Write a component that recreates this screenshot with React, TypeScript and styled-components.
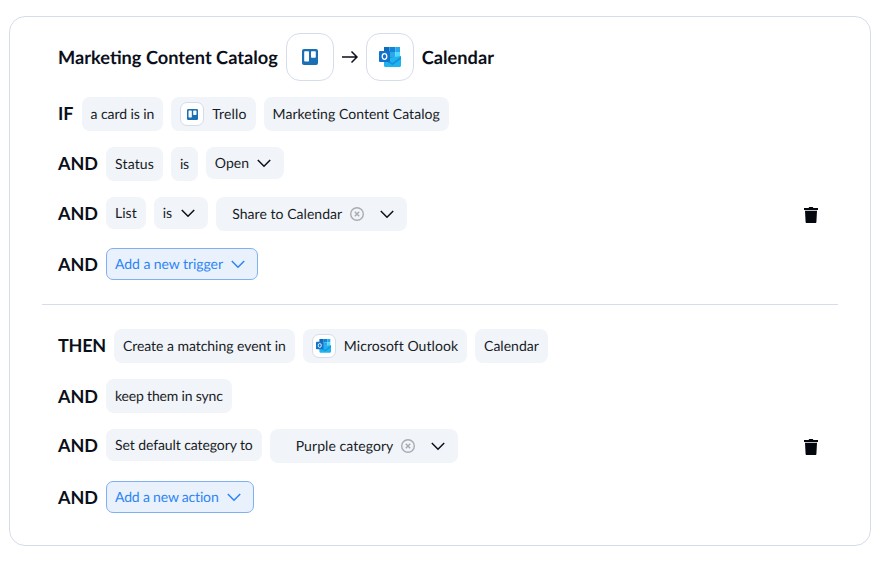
import React from "react";
import styled, { createGlobalStyle } from "styled-components";

const Global = createGlobalStyle`
  html, body { margin: 0; padding: 0; background: #fff; }
  body {
    font-family: Lato, "Liberation Sans", sans-serif;
    color: #0b0f1a;
    text-rendering: geometricPrecision;
  }
`;

const Page = styled.div`
  width: 883px;
  height: 565px;
  padding: 16px 12px 19px 9px;
  box-sizing: border-box;
`;

const Card = styled.div`
  height: 530px;
  box-sizing: border-box;
  border: 1px solid #d5ddea;
  border-radius: 16px;
  padding: 16px 32px;
  display: flex;
  flex-direction: column;
`;

const Section = styled.div`
  display: flex;
  flex-direction: column;
  gap: 16px;
  padding: 0 16px;
`;

const Divider = styled.hr`
  border: 0;
  height: 1px;
  background: #d5ddea;
  margin: 23px 0 24px;
`;

const TitleRow = styled.div`
  display: flex;
  align-items: center;
  height: 48px;
  gap: 8px;
  font-size: 18.22px;
  font-weight: 700;
`;

const LogoBox = styled.div`
  width: 48px;
  height: 48px;
  box-sizing: border-box;
  border: 1px solid #d5ddea;
  border-radius: 14px;
  display: flex;
  align-items: center;
  justify-content: center;
  background: #fff;
`;

const ArrowSlot = styled.div`
  width: 16px;
  display: flex;
  justify-content: center;
`;

const Row = styled.div`
  display: flex;
  align-items: flex-start;
  gap: 8px;
  height: 34px;
`;

const Keyword = styled.div<{ $shift?: number; $ls?: number }>`
  font-size: 18px;
  font-weight: 700;
  line-height: 32px;
  height: 34px;
  box-sizing: border-box;
  padding-top: ${(p) => p.$shift ?? 0}px;
  letter-spacing: ${(p) => p.$ls ?? 0}px;
`;

const Pill = styled.div<{ $h?: number; $pl?: number; $pr?: number; $ls?: number }>`
  height: ${(p) => p.$h ?? 34}px;
  box-sizing: border-box;
  padding: 0 ${(p) => p.$pr ?? 9}px 0 ${(p) => p.$pl ?? 9}px;
  background: #f1f4f8;
  border-radius: 8px;
  display: flex;
  align-items: center;
  font-size: 14px;
  line-height: 18px;
  letter-spacing: ${(p) => p.$ls ?? 0}px;
  white-space: nowrap;
  color: #171b26;
`;

const AddPill = styled.div<{ $top: number; $ls: number }>`
  height: 32px;
  margin-top: ${(p) => p.$top}px;
  box-sizing: border-box;
  padding: 0 11px 1px 8px;
  background: #e9f1fd;
  border: 1px solid #7fb0f4;
  border-radius: 7px;
  display: flex;
  align-items: center;
  font-size: 14px;
  letter-spacing: ${(p) => p.$ls}px;
  color: #2c84f4;
  white-space: nowrap;
`;

const MiniLogo = styled.div`
  width: 24px;
  height: 24px;
  box-sizing: border-box;
  margin-right: 8px;
  border: 1px solid #d5ddea;
  border-radius: 7px;
  background: #fff;
  display: flex;
  align-items: center;
  justify-content: center;
`;

const Caret = styled.svg<{ $ml: number }>`
  width: 16px;
  height: 16px;
  margin-left: ${(p) => p.$ml}px;
  flex: none;
`;

const ClearIcon = styled.svg`
  width: 16px;
  height: 16px;
  margin-left: 7px;
  flex: none;
`;

const TrashButton = styled.div`
  margin-left: auto;
  margin-right: -1px;
  margin-top: 1px;
  height: 34px;
  width: 24px;
  display: flex;
  align-items: center;
  justify-content: center;
`;

const Chevron = ({ ml = 8, color = "#0b0f1a" }: { ml?: number; color?: string }) => (
  <Caret $ml={ml} viewBox="0 0 16 16" fill="none">
    <path d="M1.8 5l6.2 6.2L14.2 5" stroke={color} strokeWidth="1.5" />
  </Caret>
);

const Clear = () => (
  <ClearIcon viewBox="0 0 16 16" fill="none">
    <circle cx="8" cy="8" r="6.3" stroke="#a9acb1" strokeWidth="1.4" />
    <path d="M5.8 5.8l4.4 4.4M10.2 5.8l-4.4 4.4" stroke="#a9acb1" strokeWidth="1.5" />
  </ClearIcon>
);

const Trash = () => (
  <svg width="14" height="16" viewBox="0 0 14 16">
    <path
      d="M4.6 1 5.2 0h3.6l.6 1H14v2H0V1zM1 3.8h12l-.6 11.1c0 .6-.5 1.1-1.1 1.1H2.7c-.6 0-1.1-.5-1.1-1.1z"
      fill="#05070f"
    />
  </svg>
);

const TrelloLogo = ({ size }: { size: number }) => (
  <svg width={size} height={size} viewBox="0 0 16 16">
    <rect width="16" height="16" rx="2" fill="#1a6fb5" />
    <rect x="2.2" y="2.2" width="4.8" height="10.2" rx="0.7" fill="#fff" />
    <rect x="9" y="2.2" width="4.8" height="6.6" rx="0.7" fill="#fff" />
  </svg>
);

const OutlookLogo = ({ size }: { size: number }) => (
  <svg width={size} height={(size * 20) / 22} viewBox="0 0 22 20">
    <rect x="5" y="0" width="5.5" height="5" fill="#0f6ab8" />
    <rect x="10.5" y="0" width="6" height="5" fill="#0f84d8" />
    <rect x="16.5" y="0" width="4.5" height="5" fill="#28a8ea" />
    <rect x="5" y="5" width="5.5" height="5" fill="#0f84d8" />
    <rect x="10.5" y="5" width="6" height="5" fill="#28a8ea" />
    <rect x="16.5" y="5" width="4.5" height="5" fill="#50d9ff" />
    <rect x="5" y="10" width="5.5" height="5" fill="#14447d" />
    <rect x="10.5" y="10" width="6" height="5" fill="#0f84d8" />
    <rect x="16.5" y="10" width="4.5" height="5" fill="#0f6ab8" />
    <path d="M5 11.5 22 9v9.5c0 .8-.6 1.5-1.4 1.5H6.4C5.6 20 5 19.3 5 18.5z" fill="#1fb4ee" />
    <path d="M5 11 13.5 16 22 9.5V12l-8.5 6L5 13z" fill="#1490df" />
    <rect x="0" y="4" width="11" height="11" rx="1" fill="#1273c9" />
    <ellipse cx="5.5" cy="9.5" rx="2.3" ry="2.8" fill="none" stroke="#fff" strokeWidth="1.3" />
  </svg>
);

export default function App() {
  return (
    <Page>
      <Global />
      <Card>
        <Section>
          <TitleRow>
            <span>Marketing Content Catalog</span>
            <LogoBox>
              <TrelloLogo size={16} />
            </LogoBox>
            <ArrowSlot>
              <svg width="16" height="14" viewBox="0 0 16 14" fill="none">
                <path d="M0 7h15M9.5 1.5 15 7l-5.5 5.5" stroke="#0b0f1a" strokeWidth="1.5" />
              </svg>
            </ArrowSlot>
            <LogoBox>
              <OutlookLogo size={22} />
            </LogoBox>
            <span>Calendar</span>
          </TitleRow>

          <Row>
            <Keyword>IF</Keyword>
            <Pill $ls={-0.08}>a card is in</Pill>
            <Pill $ls={0.15}>
              <MiniLogo>
                <TrelloLogo size={11} />
              </MiniLogo>
              Trello
            </Pill>
            <Pill $ls={0.04}>Marketing Content Catalog</Pill>
          </Row>

          <Row>
            <Keyword>AND</Keyword>
            <Pill $ls={0.15}>Status</Pill>
            <Pill $ls={-0.3}>is</Pill>
            <Pill $h={32} $pr={12}>
              Open
              <Chevron ml={7} />
            </Pill>
          </Row>

          <Row>
            <Keyword>AND</Keyword>
            <Pill $h={32}>List</Pill>
            <Pill $h={32} $pr={12}>
              is
              <Chevron ml={8} />
            </Pill>
            <Pill $pl={16} $pr={12} $ls={0.05}>
              Share to Calendar
              <Clear />
              <Chevron ml={14} />
            </Pill>
            <TrashButton>
              <Trash />
            </TrashButton>
          </Row>

          <Row>
            <Keyword $shift={1}>AND</Keyword>
            <AddPill $top={1} $ls={-0.06}>
              Add a new trigger
              <Chevron ml={7} color="#2c84f4" />
            </AddPill>
          </Row>
        </Section>

        <Divider />

        <Section>
          <Row>
            <Keyword $ls={-0.25}>THEN</Keyword>
            <Pill $ls={-0.04}>Create a matching event in</Pill>
            <Pill $ls={0.06}>
              <MiniLogo>
                <OutlookLogo size={15} />
              </MiniLogo>
              Microsoft Outlook
            </Pill>
            <Pill>Calendar</Pill>
          </Row>

          <Row>
            <Keyword $shift={1}>AND</Keyword>
            <Pill $ls={-0.18}>keep them in sync</Pill>
          </Row>

          <Row>
            <Keyword>AND</Keyword>
            <Pill $h={32} $ls={-0.09}>Set default category to</Pill>
            <Pill $pl={26} $pr={12} $ls={0.06}>
              Purple category
              <Clear />
              <Chevron ml={14} />
            </Pill>
            <TrashButton>
              <Trash />
            </TrashButton>
          </Row>

          <Row>
            <Keyword $shift={2}>AND</Keyword>
            <AddPill $top={2} $ls={-0.18}>
              Add a new action
              <Chevron ml={7} color="#2c84f4" />
            </AddPill>
          </Row>
        </Section>
      </Card>
    </Page>
  );
}
